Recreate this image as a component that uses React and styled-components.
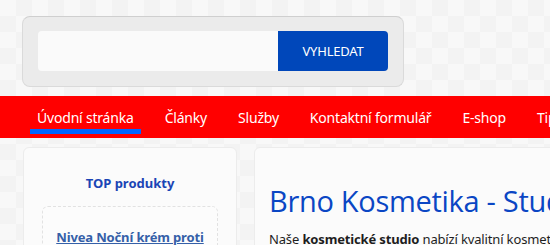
import styled, { createGlobalStyle } from "styled-components";

const GlobalStyle = createGlobalStyle`
  html, body {
    margin: 0;
    padding: 0;
  }
  body {
    font-family: "Noto Sans", "DejaVu Sans", sans-serif;
    background-color: #f7f7f7;
    background-image: conic-gradient(#f3f3f3 25%, #f8f8f8 0 50%, #f3f3f3 0 75%, #f8f8f8 0);
    background-size: 32px 32px;
    overflow: hidden;
  }
`;

// 검색 영역
const Top = styled.header`
  padding: 16px 0 0 22px;
  height: 80px;
`;

const SearchBox = styled.form`
  width: 350px;
  display: flex;
  padding: 14px 15px 15px 15px;
  background: #ebebeb;
  border: 1px solid #dadada;
  border-top-color: #cfcfcf;
  border-radius: 8px;
`;

const SearchInput = styled.input`
  flex: 1;
  height: 40px;
  border: none;
  border-radius: 4px 0 0 4px;
  background: #fafafa;
  padding: 0 10px;
  outline: none;
`;

const SearchButton = styled.button`
  width: 110px;
  height: 40px;
  border: none;
  border-radius: 0 4px 4px 0;
  background: #0047ba;
  color: #fff;
  font-family: "Noto Sans", sans-serif;
  font-size: 13px;
  letter-spacing: -0.2px;
  cursor: pointer;
`;

// 메뉴
const Nav = styled.nav`
  background: #ff0000;
  height: 42px;
  display: flex;
  align-items: stretch;
  padding-left: 30px;
  white-space: nowrap;
`;

const NavItem = styled.a`
  display: flex;
  align-items: center;
  padding: 0 7px;
  color: #fff;
  font-size: 14px;
  letter-spacing: -0.2px;
  text-decoration: none;
  position: relative;

  &.active::after {
    content: "";
    position: absolute;
    left: 0;
    right: 0;
    bottom: 4px;
    height: 5px;
    background: #0066ff;
  }
`;

const Separator = styled.span`
  width: 1px;
  margin: 6px 6px 6px 11px;
  background: #e40000;
`;

// 본문
const Main = styled.main`
  display: flex;
  gap: 17px;
  padding: 9px 0 0 23px;
`;

const Panel = styled.section`
  background: #fbfbfb;
  border: 1px solid #ececec;
  border-radius: 6px;
  flex-shrink: 0;
`;

const Sidebar = styled(Panel)`
  width: 192px;
  padding: 26px 10px 0 10px;
  text-align: center;
`;

const SideTitle = styled.h3`
  margin: 0 0 14px;
  color: #1a45b5;
  font-size: 13px;
  font-weight: 700;
`;

const ProductBox = styled.div`
  border: 1px dashed #e2e2e2;
  border-radius: 6px;
  margin: 0 8px;
  padding: 18px 2px 20px;
  background: #fcfcfc;
`;

const ProductLink = styled.a`
  color: #3560a8;
  font-size: 13px;
  font-weight: 700;
  letter-spacing: -0.15px;
  text-decoration: underline;
`;

const Content = styled(Panel)`
  width: 400px;
  padding: 33px 15px 0 14px;
`;

const Heading = styled.h1`
  margin: 0 0 10px;
  color: #0a46c4;
  font-family: "Open Sans", "Noto Sans", sans-serif;
  font-size: 29px;
  font-weight: 400;
  letter-spacing: -0.3px;
  white-space: nowrap;
`;

const Text = styled.p`
  margin: 0;
  color: #1e1e1e;
  font-size: 13px;
  letter-spacing: -0.15px;
  white-space: nowrap;
`;

const menu = ["Úvodní stránka", "Články", "Služby", "Kontaktní formulář", "E-shop", "Tipy"];

export default function App() {
  return (
    <>
      <GlobalStyle />
      <Top>
        <SearchBox onSubmit={(e) => e.preventDefault()}>
          <SearchInput type="text" />
          <SearchButton type="submit">VYHLEDAT</SearchButton>
        </SearchBox>
      </Top>
      <Nav>
        {menu.map((item, i) => (
          <>
            {i > 0 && <Separator key={"s" + i} />}
            <NavItem key={item} href="#" className={i === 0 ? "active" : ""}>
              {item}
            </NavItem>
          </>
        ))}
      </Nav>
      <Main>
        <Sidebar>
          <SideTitle>TOP produkty</SideTitle>
          <ProductBox>
            <ProductLink href="#">Nivea Noční krém proti vráskám</ProductLink>
          </ProductBox>
        </Sidebar>
        <Content>
          <Heading>Brno Kosmetika - Studio</Heading>
          <Text>
            Naše <b>kosmetické studio</b> nabízí kvalitní kosmetické služby
          </Text>
        </Content>
      </Main>
    </>
  );
}
